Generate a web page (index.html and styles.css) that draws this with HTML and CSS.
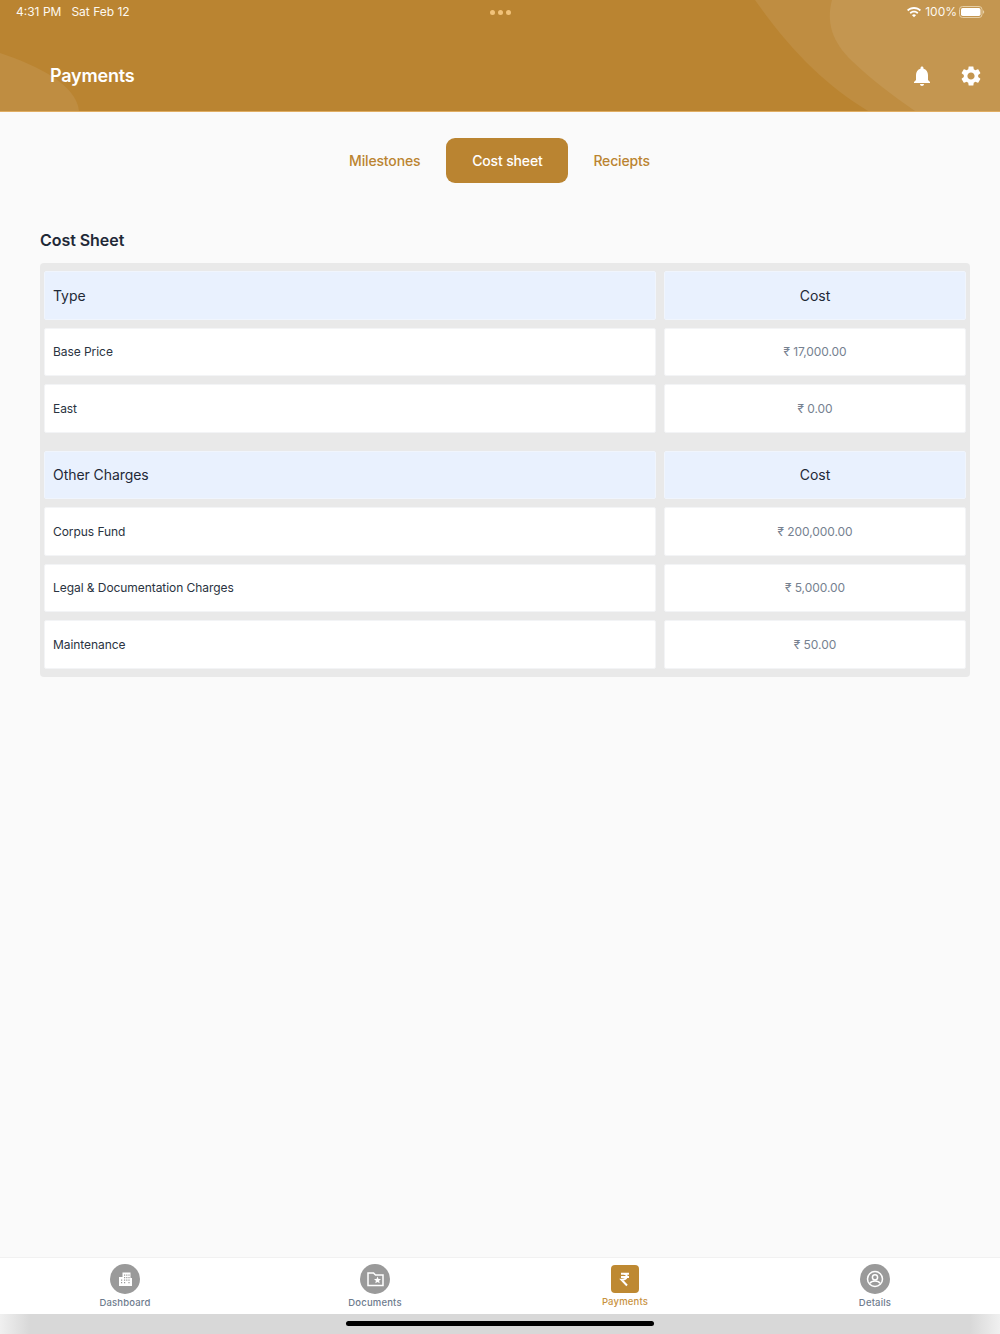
FILE: index.html
```html
<!DOCTYPE html>
<html lang="en">
<head>
<meta charset="utf-8">
<title>Payments</title>
<link rel="stylesheet" href="styles.css">
</head>
<body>
<div class="page">
  <header class="header">
    <svg class="header-art" viewBox="0 0 1000 111" preserveAspectRatio="none" aria-hidden="true">
      <path class="art-a" d="M755 0C790 50 825 85 868 111H1000V0Z"/>
      <path class="art-b" d="M832 0C826 22 832 42 852 61C872 80 893 96 915 111H1000V0Z"/>
      <path class="art-a" d="M0 53C38 66 76 84 79 111H0Z"/>
    </svg>
    <div class="status">
      <div class="status-left"><span>4:31 PM</span><span>Sat Feb 12</span></div>
      <div class="status-dots"><i></i><i></i><i></i></div>
      <div class="status-right">
        <svg class="wifi" viewBox="0 0 16 12"><path d="M8 1C5.200 1 2.800 2.100 1 3.800L2.300 5.200C3.800 3.800 5.800 2.900 8 2.900S12.200 3.800 13.700 5.200L15 3.800C13.200 2.100 10.800 1 8 1ZM8 4.700C6.300 4.700 4.800 5.300 3.600 6.500L4.900 7.900C5.700 7.100 6.800 6.600 8 6.600S10.300 7.100 11.100 7.900L12.400 6.500C11.200 5.300 9.700 4.700 8 4.700ZM8 8.300C7.200 8.300 6.500 8.600 6 9.200L8 11.300L10 9.200C9.500 8.600 8.800 8.300 8 8.300Z"/></svg>
        <span>100%</span>
        <svg class="battery" viewBox="0 0 26 12"><rect class="battery-shell" x="0.500" y="0.500" width="22.500" height="11" rx="3"/><rect class="battery-fill" x="2" y="2" width="19.500" height="8" rx="1.700"/><path class="battery-tip" d="M24 4.200C24.800 4.500 25.200 5.200 25.200 6S24.800 7.500 24 7.800Z"/></svg>
      </div>
    </div>
    <div class="titlebar">
      <h1 class="title">Payments</h1>
      <div class="actions">
        <svg class="action" viewBox="0 0 24 24"><path d="M12 22c1.100 0 2-.9 2-2h-4c0 1.100.9 2 2 2zm6-6v-5c0-3.070-1.630-5.640-4.500-6.320V4c0-.83-.67-1.500-1.500-1.500s-1.500.67-1.500 1.500v.68C7.640 5.360 6 7.920 6 11v5l-2 2v1h16v-1l-2-2z"/></svg>
        <svg class="action" viewBox="0 0 24 24"><path d="M19.140 12.940c.04-.3.060-.61.060-.94 0-.32-.02-.64-.07-.94l2.030-1.580c.18-.14.230-.41.120-.61l-1.920-3.320c-.12-.22-.37-.29-.59-.22l-2.390.96c-.5-.38-1.030-.7-1.620-.94l-.36-2.540c-.04-.24-.24-.41-.48-.41h-3.840c-.24 0-.43.170-.47.410l-.36 2.540c-.59.240-1.130.57-1.620.94l-2.390-.96c-.22-.08-.47 0-.59.220L2.740 8.870c-.12.210-.08.470.12.610l2.030 1.580c-.05.3-.09.630-.09.940s.02.640.07.940l-2.030 1.580c-.18.140-.23.410-.12.610l1.920 3.320c.12.220.37.290.59.220l2.390-.96c.5.380 1.030.7 1.620.94l.36 2.540c.05.240.24.410.48.410h3.840c.24 0 .44-.17.470-.41l.36-2.540c.59-.24 1.130-.56 1.620-.94l2.390.96c.22.080.47 0 .59-.22l1.920-3.320c.12-.22.070-.47-.12-.61l-2.010-1.580zM12 15.600c-1.980 0-3.600-1.620-3.600-3.600s1.620-3.600 3.600-3.600 3.600 1.620 3.600 3.600-1.620 3.600-3.600 3.600z"/></svg>
      </div>
    </div>
  </header>

  <main class="main">
    <nav class="tabs">
      <a class="tab">Milestones</a>
      <a class="tab tab-active">Cost sheet</a>
      <a class="tab">Reciepts</a>
    </nav>
    <h2 class="heading">Cost Sheet</h2>
    <div class="sheet">
      <section class="group">
        <div class="cell head">Type</div><div class="cell head center">Cost</div>
        <div class="cell">Base Price</div><div class="cell value">₹ 17,000.00</div>
        <div class="cell">East</div><div class="cell value">₹ 0.00</div>
      </section>
      <section class="group">
        <div class="cell head">Other Charges</div><div class="cell head center">Cost</div>
        <div class="cell">Corpus Fund</div><div class="cell value">₹ 200,000.00</div>
        <div class="cell">Legal &amp; Documentation Charges</div><div class="cell value">₹ 5,000.00</div>
        <div class="cell">Maintenance</div><div class="cell value">₹ 50.00</div>
      </section>
    </div>
  </main>

  <footer class="tabbar">
    <a class="nav-item">
      <span class="nav-icon"><svg viewBox="0 0 30 30"><path d="M9 13h3.500V8.500h8V14H22V22H9Z"/><path class="cut" d="M14 10.500h1.200v1.200H14ZM16.200 10.500h1.200v1.200h-1.200ZM18.400 10.500h1.200v1.200h-1.200ZM14 13h1.200v1.200H14ZM16.200 13h1.200v1.200h-1.200ZM18.400 13h1.200v1.200h-1.200ZM11 15.500h1.200v1.200H11ZM14 15.500h1.200v1.200H14ZM16.200 15.500h1.200v1.200h-1.200ZM18.400 15.500h1.200v1.200h-1.200ZM11 18h1.200v1.200H11ZM14 18h1.200v1.200H14ZM18.400 18h1.200v1.200h-1.200Z"/></svg></span>
      <span>Dashboard</span>
    </a>
    <a class="nav-item">
      <span class="nav-icon"><svg viewBox="0 0 30 30"><path class="line" d="M8 9h5.500l2 2H23v10.500H8Z"/><path d="M17.500 12.500l1 2.400 2.500.2-1.900 1.700.6 2.500-2.200-1.300-2.200 1.300.6-2.500-1.900-1.700 2.500-.2Z"/></svg></span>
      <span>Documents</span>
    </a>
    <a class="nav-item nav-active">
      <span class="nav-icon nav-icon-square"><svg viewBox="0 0 28 28"><path class="line bold" d="M10 8.700H18M10 12H18M12.500 8.700C15 8.700 16 10 15.600 12C15.200 13.700 13.500 14.700 10.500 14.700L16 20.500"/></svg></span>
      <span>Payments</span>
    </a>
    <a class="nav-item">
      <span class="nav-icon"><svg viewBox="0 0 30 30"><circle class="line" cx="15" cy="15" r="7.500"/><circle class="line" cx="15" cy="13.300" r="2.600"/><path class="line" d="M9.800 19.300C11 17.500 13 17 15 17S19 17.500 20.200 19.300"/></svg></span>
      <span>Details</span>
    </a>
  </footer>
  <div class="home"><span class="home-bar"></span></div>
</div>
</body>
</html>
```

FILE: styles.css
```css
* { box-sizing: border-box; }
html, body { margin: 0; padding: 0; }
body { font-family: Inter, "Noto Sans", sans-serif; background: #fafafa; color: #1f2937; }

.page { width: 1000px; height: 1334px; display: flex; flex-direction: column; overflow: hidden; }

.header { position: relative; flex: none; height: 112px; background: #ba8431; border-bottom: 1px solid #e0ad62; color: #fff; }
.header-art { position: absolute; left: 0; top: 0; width: 1000px; height: 111px; }
.art-a { fill: #bf8d41; }
.art-b { fill: #c49650; }

.status { position: relative; display: grid; grid-template-columns: 1fr auto 1fr; align-items: center; height: 23px; padding: 0 15px 0 16px; font-size: 12px; color: #fdf8ef; }
.status-left { display: flex; gap: 10px; }
.status-dots { display: flex; gap: 3px; margin-top: 1px; }
.status-dots i { width: 5px; height: 5px; border-radius: 50%; background: #f1c27a; }
.status-right { display: flex; align-items: center; justify-content: flex-end; gap: 2px; }
.wifi { width: 16px; height: 12px; fill: #fff; margin-right: 1px; }
.battery { width: 26px; height: 12px; }
.battery-shell { fill: none; stroke: #e6cfa6; }
.battery-fill { fill: #fff; }
.battery-tip { fill: #e6cfa6; }

.titlebar { position: relative; display: flex; align-items: center; justify-content: space-between; height: 52px; margin-top: 27px; padding: 0 17px 0 50px; }
.title { margin: 0; font-size: 18px; font-weight: 600; letter-spacing: -0.2px; line-height: 1; color: #fff; }
.actions { display: flex; gap: 25px; }
.action { width: 24px; height: 24px; fill: #fff; display: block; }

.main { flex: 1; padding: 26px 30px 0 40px; }
.tabs { display: flex; justify-content: center; align-items: center; gap: 26px; height: 45px; padding-right: 11px; }
.tab { font-size: 14px; font-weight: 500; letter-spacing: -0.15px; color: #ba8431; padding-bottom: 1px; }
.tab-active { display: flex; align-items: center; justify-content: center; width: 122px; height: 45px; margin-right: -1px; border-radius: 9px; background: #ba8431; color: #fff; }
.heading { margin: 47px 0 14px; font-size: 16px; line-height: 19px; font-weight: 600; letter-spacing: -0.05px; color: #1f2937; position: relative; top: 0.5px; }

.sheet { display: flex; flex-direction: column; gap: 18px; padding: 8px 4px; border-radius: 4px; background: #e9e9e9; }
.group { display: grid; grid-template-columns: 612px 302px; gap: 8px; grid-auto-rows: 48.5px; }
.cell { display: flex; align-items: center; padding: 0 8px; border: 1px solid #f3f4f6; border-radius: 2px; background: #fff; font-size: 12px; font-weight: 400; letter-spacing: -0.06px; color: #2a3341; }
.head { background: #e9f1fe; border-color: #f0f5fd; font-size: 14px; letter-spacing: -0.06px; color: #1f2937; }
.center { justify-content: center; }
.value { justify-content: center; color: #768190; }

.tabbar { flex: none; display: grid; grid-template-columns: repeat(4, 250px); height: 57px; background: #fff; border-top: 1px solid #f1f1f1; }
.nav-item { display: flex; flex-direction: column; align-items: center; padding-top: 6px; font-size: 9.500px; font-weight: 500; letter-spacing: 0.18px; line-height: 12px; color: #6e7b8d; gap: 3px; }
.nav-icon { display: block; width: 30px; height: 30px; border-radius: 50%; background: #9a9a9a; }
.nav-icon svg { display: block; width: 100%; height: 100%; fill: #fff; }
.nav-icon .cut { fill: #9a9a9a; }
.nav-icon .line { fill: none; stroke: #fff; stroke-width: 1.500; }
.nav-icon .bold { stroke-width: 2; }
.nav-icon-square { width: 28px; height: 28px; margin: 1px 0 0.5px; border-radius: 4px; background: #be8932; }
.nav-active { color: #c8923f; gap: 2px; }

.home { flex: none; display: flex; justify-content: center; height: 20px; padding-top: 7px; background: linear-gradient(90deg, #f0f0f0 0, #d8d8d8 3%, #d8d8d8 97%, #f0f0f0 100%); }
.home-bar { width: 308px; height: 5px; border-radius: 3px; background: #000; }
```
